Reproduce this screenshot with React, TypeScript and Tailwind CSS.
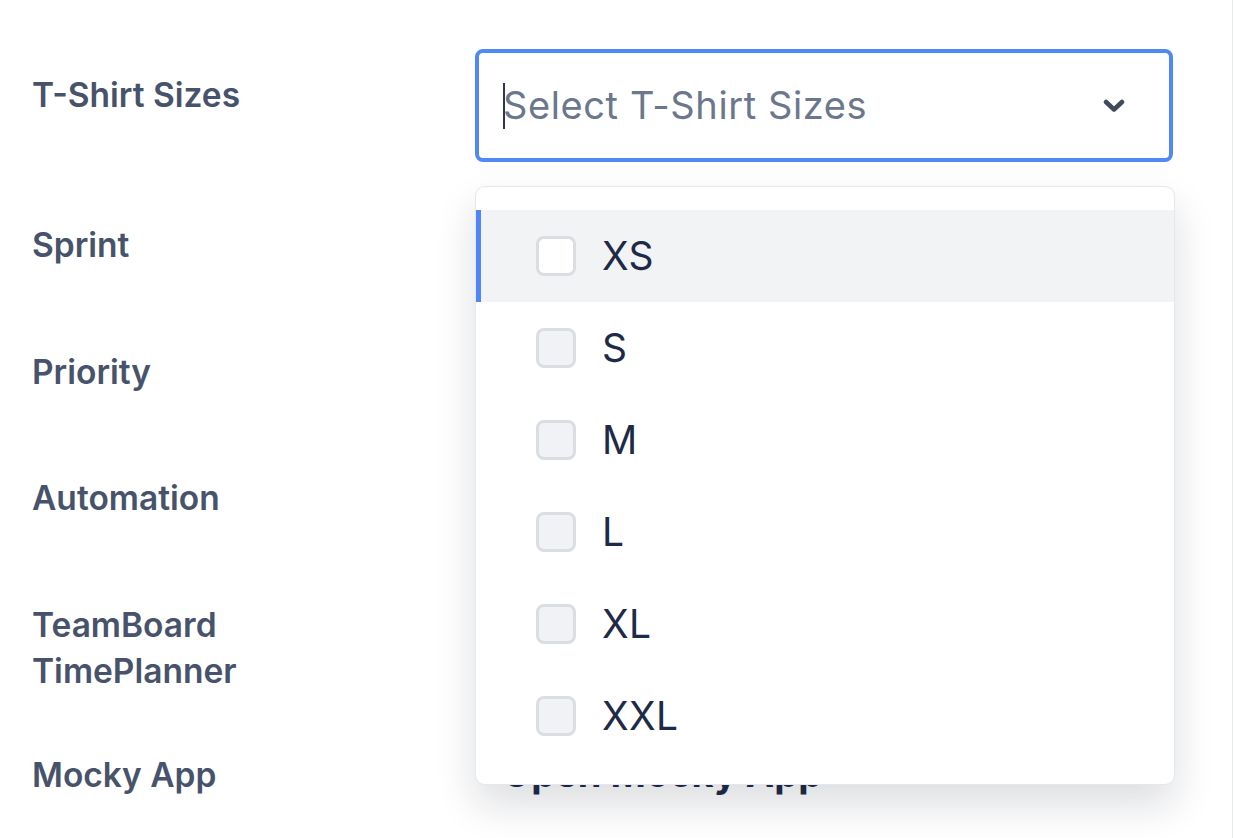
import React from 'react';

const sizes = ['XS', 'S', 'M', 'L', 'XL', 'XXL'];

interface FieldRowProps {
  label: React.ReactNode;
  height: string;
  children?: React.ReactNode;
}

const FieldRow: React.FC<FieldRowProps> = ({ label, height, children }) => (
  <div className={`flex ${height}`}>
    <div className="w-[475px] shrink-0 pl-[32px] pt-[23px] text-[33.5px] leading-[46px] font-semibold text-[#47536a]">
      {label}
    </div>
    <div className="w-[700px]">{children}</div>
  </div>
);

const SizeSelect: React.FC = () => (
  <div className="flex items-center h-[113px] w-[698px] rounded-[8px] border-[4px] border-[#5189f3] bg-white pl-[24px] pr-[44px]">
    <span className="w-[2px] h-[46px] bg-[#2d3748] -mr-[2px]" />
    <span className="flex-1 text-[38px] tracking-[0.6px] text-[#6b778c]">Select T-Shirt Sizes</span>
    <svg width="22" height="14" viewBox="0 0 22 14" className="text-[#3f4a5e]">
      <path d="M3 3 L11 10.5 L19 3" fill="none" stroke="currentColor" strokeWidth="4.5" strokeLinecap="round" strokeLinejoin="round" />
    </svg>
  </div>
);

const SizeOption: React.FC<{ label: string; active?: boolean }> = ({ label, active }) => (
  <div className={active ? 'flex items-center h-[92px] pl-[55px] bg-[#f1f3f5] border-l-[5px] border-[#4f86f7]' : 'flex items-center h-[92px] pl-[60px]'}>
    <span
      className={
        active
          ? 'w-[40px] h-[40px] rounded-[8px] border-[3px] border-[#dadee3] bg-white'
          : 'w-[40px] h-[40px] rounded-[8px] border-[3px] border-[#dadee3] bg-[#f0f2f5]'
      }
    />
    <span className="ml-[26px] text-[39px] tracking-[0.4px] text-[#1e2a47]">{label}</span>
  </div>
);

export default function App() {
  return (
    <div
      className="relative w-[1234px] h-[838px] overflow-hidden bg-white"
      style={{ fontFamily: 'Inter, "Noto Sans", sans-serif' }}
    >
      <div className="w-[1233px] h-full border-r border-[#e7e9ec] pt-[49px]">
        <FieldRow label="T-Shirt Sizes" height="h-[150px]">
          <SizeSelect />
        </FieldRow>
        <FieldRow label="Sprint" height="h-[127px]" />
        <FieldRow label="Priority" height="h-[126px]" />
        <FieldRow label="Automation" height="h-[127px]" />
        <FieldRow
          label={
            <>
              TeamBoard
              <br />
              TimePlanner
            </>
          }
          height="h-[150px]"
        />
        <FieldRow label="Mocky App" height="h-[109px]">
          <div className="pl-[27px] pt-[21px] text-[38px] leading-[46px] font-bold text-[#1e2a47]">
            Open Mocky App
          </div>
        </FieldRow>
      </div>

      <div className="absolute left-[475px] top-[186px] w-[700px] h-[599px] rounded-[10px] border border-[#e5e7eb] bg-white py-[23px] overflow-hidden shadow-[0_20px_40px_rgba(15,23,42,0.14)]">
        {sizes.map((s, i) => (
          <SizeOption key={s} label={s} active={i === 0} />
        ))}
      </div>
    </div>
  );
}
